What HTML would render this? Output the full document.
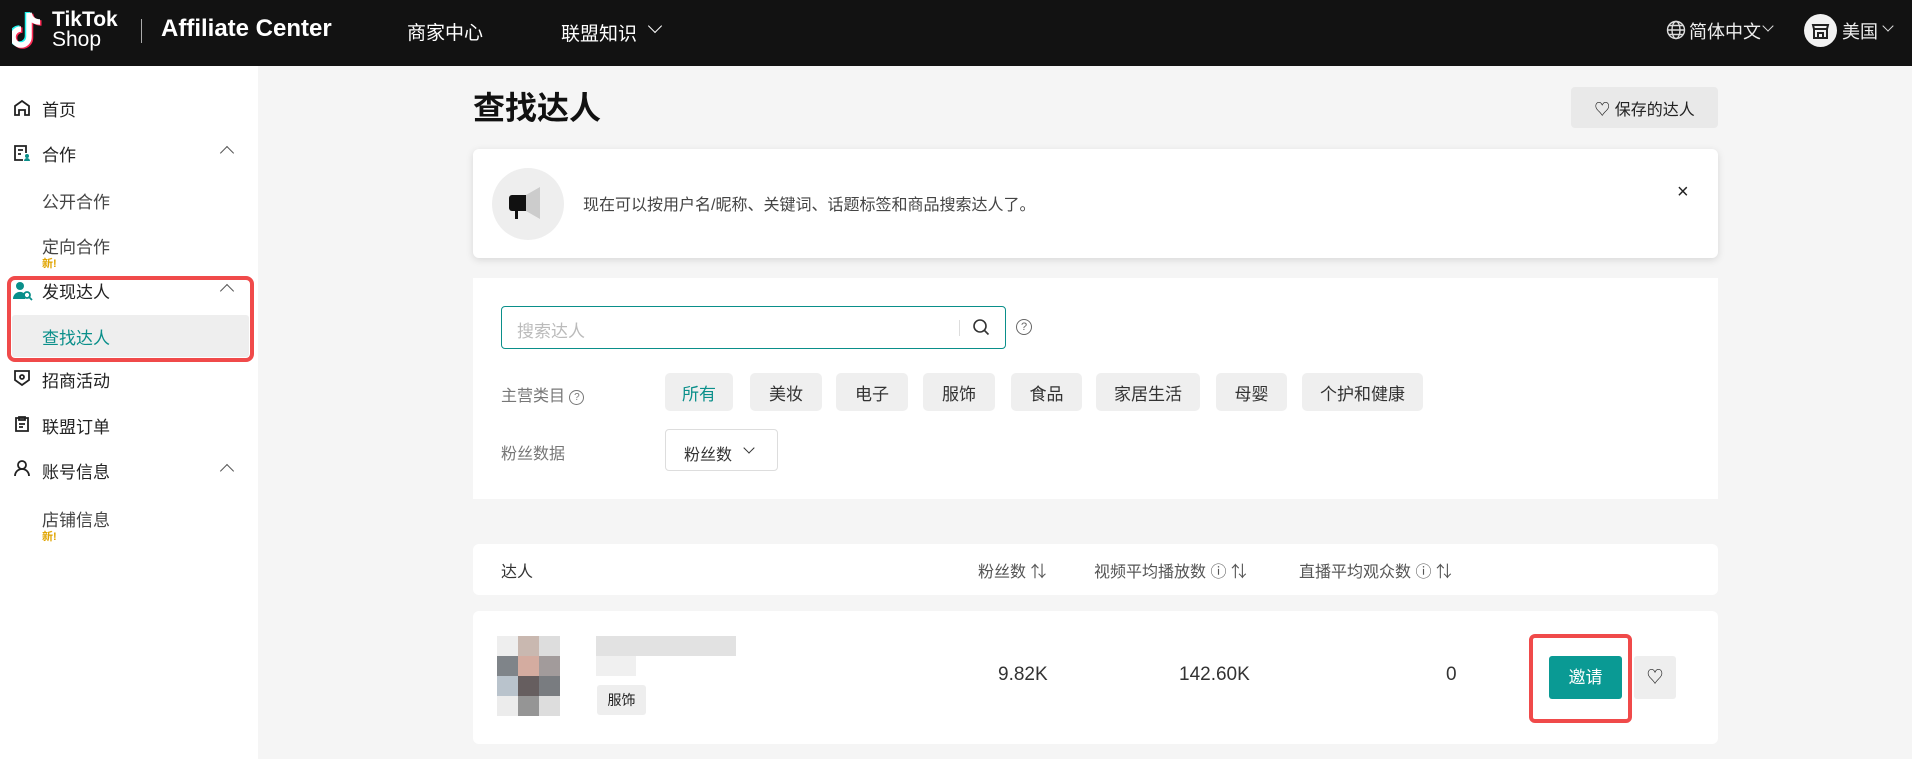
<!DOCTYPE html>
<html><head><meta charset="utf-8"><style>
*{box-sizing:border-box;margin:0;padding:0}
body{width:1912px;height:759px;overflow:hidden;background:#f5f5f5;font-family:"Liberation Sans","Noto Sans CJK SC",sans-serif;color:#222;position:relative}
.a{position:absolute}
.hdr{left:0;top:0;width:1912px;height:66px;background:#121212;color:#fff}
.side{left:0;top:66px;width:258px;height:693px;background:#fff}
.si{position:absolute;left:42px;font-size:17px;color:#222}
.sub{position:absolute;left:42px;font-size:17px;color:#444}
.new{position:absolute;left:42px;font-size:11px;color:#e0a400;font-weight:bold}
.ic{position:absolute;left:13px}
.chev{position:absolute;left:222px;width:10px;height:10px;border-left:1.6px solid #555;border-top:1.6px solid #555;transform:rotate(45deg)}
.card{background:#fff;border-radius:6px}
.chip{position:absolute;top:373px;height:38px;background:#efefef;border-radius:5px;font-size:17px;color:#333;display:flex;align-items:center;justify-content:center}
.th{position:absolute;top:558px;font-size:16px;color:#555}
.v{position:absolute;top:664px;font-size:19px;color:#333}
</style></head><body>
<div class="a hdr">
 <svg class="a" style="left:12px;top:9px" width="32" height="42" viewBox="0 0 32 42"><g fill="none" stroke-width="5.5"><path d="M17 4v24a8 8 0 1 1-8-8" stroke="#25f4ee" transform="translate(-1.5,-1)"/><path d="M17 4v24a8 8 0 1 1-8-8M17 4c1 6 5 9 11 9" stroke="#fe2c55" transform="translate(1.5,1)"/><path d="M17 4v24a8 8 0 1 1-8-8M17 4c1 6 5 9 11 9" stroke="#fff"/></g></svg>
 <div class="a" style="left:52px;top:9px;font-weight:bold;font-size:21px;line-height:21px">TikTok</div>
 <div class="a" style="left:52px;top:29px;font-size:21px;line-height:22px">Shop</div>
 <div class="a" style="left:141px;top:19px;width:1px;height:24px;background:#aaa"></div>
 <div class="a" style="left:161px;top:15px;font-size:24px;font-weight:bold">Affiliate Center</div>
 <div class="a" style="left:407px;top:18px;font-size:19px">商家中心</div>
 <div class="a" style="left:561px;top:19px;font-size:19px">联盟知识</div>
 <div class="a" style="left:650px;top:21px;width:10px;height:10px;border-right:1.8px solid #fff;border-bottom:1.8px solid #fff;transform:rotate(45deg)"></div>
 <svg class="a" style="left:1666px;top:20px" width="20" height="20" viewBox="0 0 20 20" fill="none" stroke="#ddd" stroke-width="1.4"><circle cx="10" cy="10" r="8.5"/><ellipse cx="10" cy="10" rx="4" ry="8.5"/><path d="M1.5 10h17M3 5.5h14M3 14.5h14"/></svg>
 <div class="a" style="left:1689px;top:18px;font-size:18px;color:#eee">简体中文</div>
 <div class="a" style="left:1764px;top:22px;width:8px;height:8px;border-right:1.4px solid #ddd;border-bottom:1.4px solid #ddd;transform:rotate(45deg)"></div>
 <div class="a" style="left:1804px;top:14px;width:33px;height:33px;border-radius:50%;background:#f2f2f2"></div>
 <svg class="a" style="left:1811px;top:21px" width="19" height="19" viewBox="0 0 19 19" fill="none" stroke="#222" stroke-width="2"><path d="M2 4h15l-1 4H3zM3 8v9h13V8M7 17v-5h5v5"/></svg>
 <div class="a" style="left:1842px;top:18px;font-size:18px;color:#eee">美国</div>
 <div class="a" style="left:1884px;top:22px;width:8px;height:8px;border-right:1.4px solid #ddd;border-bottom:1.4px solid #ddd;transform:rotate(45deg)"></div>
</div>
<div class="a side">
 <svg class="ic" style="top:33px" width="18" height="18" viewBox="0 0 18 18" fill="none" stroke="#222" stroke-width="1.8"><path d="M2 16V7l7-5 7 5v9h-4v-5H6v5z"/></svg>
 <div class="si" style="top:30px">首页</div>
 <svg class="ic" style="top:78px" width="18" height="18" viewBox="0 0 18 18" fill="none" stroke="#222" stroke-width="1.8"><path d="M10 16H2V2h11v7M5 6h5M5 10h3"/><circle cx="14" cy="12" r="2" fill="#0a8f8a" stroke="none"/><path d="M11 17a3 3 0 0 1 6 0" fill="#0a8f8a" stroke="none"/></svg>
 <div class="si" style="top:75px">合作</div>
 <div class="chev" style="top:82px"></div>
 <div class="sub" style="top:122px">公开合作</div>
 <div class="sub" style="top:167px">定向合作</div>
 <div class="new" style="top:189px">新!</div>
 <div class="a" style="left:7px;top:210px;width:247px;height:86px;border:4px solid #f04a4a;border-radius:8px"></div>
 <svg class="ic" style="top:215px" width="20" height="20" viewBox="0 0 20 20"><circle cx="7" cy="5" r="4" fill="#0a8f8a"/><path d="M0 18a7 7 0 0 1 12-5v5z" fill="#0a8f8a"/><circle cx="14" cy="14" r="3" fill="none" stroke="#0a8f8a" stroke-width="1.8"/><path d="M16 16l3 3" stroke="#0a8f8a" stroke-width="1.8"/></svg>
 <div class="si" style="top:212px">发现达人</div>
 <div class="chev" style="top:220px"></div>
 <div class="a" style="left:12px;top:249px;width:237px;height:42px;background:#eeeeee;border-radius:3px"></div>
 <div class="sub" style="top:258px;color:#0a8f8a">查找达人</div>
 <svg class="ic" style="top:303px" width="18" height="18" viewBox="0 0 18 18" fill="none" stroke="#222" stroke-width="1.8"><path d="M2 2h14v9l-7 5-7-5z"/><circle cx="9" cy="8" r="2"/></svg>
 <div class="si" style="top:301px">招商活动</div>
 <svg class="ic" style="top:349px" width="18" height="18" viewBox="0 0 18 18" fill="none" stroke="#222" stroke-width="1.8"><path d="M3 3h12v13H3zM6 2h6v3H6zM6 9h6M6 12h4"/></svg>
 <div class="si" style="top:347px">联盟订单</div>
 <svg class="ic" style="top:393px" width="18" height="18" viewBox="0 0 18 18" fill="none" stroke="#222" stroke-width="1.8"><circle cx="9" cy="6" r="4"/><path d="M2 17a7 7 0 0 1 14 0"/></svg>
 <div class="si" style="top:392px">账号信息</div>
 <div class="chev" style="top:400px"></div>
 <div class="sub" style="top:440px">店铺信息</div>
 <div class="new" style="top:462px">新!</div>
</div>

<div class="a" style="left:473px;top:83px;font-size:32px;font-weight:bold;color:#111">查找达人</div>
<div class="a" style="left:1571px;top:87px;width:147px;height:41px;background:#e9e9e9;border-radius:4px;font-size:16px;color:#222;display:flex;align-items:center;justify-content:center">♡&nbsp;保存的达人</div>

<div class="a card" style="left:473px;top:149px;width:1245px;height:109px;box-shadow:0 2px 8px rgba(0,0,0,.12)">
 <div class="a" style="left:19px;top:19px;width:72px;height:72px;border-radius:50%;background:#eee"></div>
 <svg class="a" style="left:34px;top:36px" width="40" height="40" viewBox="0 0 40 40"><path d="M19 10l14-8v32l-14-8z" fill="#ccc"/><path d="M5 10h14v16H5a3 3 0 0 1-3-3v-10a3 3 0 0 1 3-3z" fill="#111"/><rect x="8" y="26" width="3" height="8" fill="#111"/></svg>
 <div class="a" style="left:110px;top:42px;font-size:16px;color:#444">现在可以按用户名/昵称、关键词、话题标签和商品搜索达人了。</div>
 <div class="a" style="left:1204px;top:32px;font-size:20px;color:#222">×</div>
</div>

<div class="a card" style="left:473px;top:278px;width:1245px;height:221px;border-radius:0"></div>
<div class="a" style="left:501px;top:306px;width:505px;height:43px;border:1.5px solid #0a8f8a;border-radius:4px;background:#fff">
 <div class="a" style="left:15px;top:10px;font-size:17px;color:#bbb">搜索达人</div>
 <div class="a" style="left:457px;top:13px;width:1px;height:16px;background:#ddd"></div>
 <svg class="a" style="left:470px;top:11px" width="18" height="18" viewBox="0 0 18 18" fill="none" stroke="#333" stroke-width="1.6"><circle cx="8" cy="8" r="6"/><path d="M12.5 12.5l4 4"/></svg>
</div>
<div class="a" style="left:1016px;top:319px;width:16px;height:16px;border:1.3px solid #666;border-radius:50%;font-size:11px;text-align:center;line-height:14px;color:#666">?</div>
<div class="a" style="left:501px;top:382px;font-size:16px;color:#777">主营类目 <span style="display:inline-block;width:15px;height:15px;border:1.2px solid #777;border-radius:50%;font-size:10px;text-align:center;line-height:13px;vertical-align:1px">?</span></div>
<div class="chip" style="left:665px;width:68px;color:#0a8f8a">所有</div>
<div class="chip" style="left:750px;width:72px">美妆</div>
<div class="chip" style="left:836px;width:72px">电子</div>
<div class="chip" style="left:923px;width:72px">服饰</div>
<div class="chip" style="left:1011px;width:71px">食品</div>
<div class="chip" style="left:1096px;width:104px">家居生活</div>
<div class="chip" style="left:1216px;width:71px">母婴</div>
<div class="chip" style="left:1302px;width:121px">个护和健康</div>
<div class="a" style="left:501px;top:440px;font-size:16px;color:#777">粉丝数据</div>
<div class="a" style="left:665px;top:429px;width:113px;height:42px;border:1px solid #ddd;border-radius:4px;background:#fff;font-size:16px;color:#333;padding:11px 0 0 18px">粉丝数</div>
<div class="a" style="left:745px;top:444px;width:8px;height:8px;border-right:1.5px solid #333;border-bottom:1.5px solid #333;transform:rotate(45deg)"></div>

<div class="a card" style="left:473px;top:544px;width:1245px;height:51px"></div>
<div class="th" style="left:501px;color:#333">达人</div>
<div class="th" style="left:978px">粉丝数 ⇅</div>
<div class="th" style="left:1094px">视频平均播放数 ⓘ ⇅</div>
<div class="th" style="left:1299px">直播平均观众数 ⓘ ⇅</div>

<div class="a card" style="left:473px;top:611px;width:1245px;height:133px"></div>
<div class="a" style="left:497px;top:636px;display:grid;grid-template-columns:repeat(3,21px);grid-template-rows:repeat(4,20px)">
 <div style="background:#eee"></div><div style="background:#c9b8b0"></div><div style="background:#ddd"></div>
 <div style="background:#7f8489"></div><div style="background:#d4aca0"></div><div style="background:#a29b9b"></div>
 <div style="background:#b9c3cc"></div><div style="background:#665e5f"></div><div style="background:#797c80"></div>
 <div style="background:#ececec"></div><div style="background:#959595"></div><div style="background:#ddd"></div>
</div>
<div class="a" style="left:596px;top:636px;width:140px;height:20px;background:#e2e2e2"></div>
<div class="a" style="left:596px;top:656px;width:40px;height:20px;background:#f0f0f0"></div>
<div class="a" style="left:597px;top:685px;width:49px;height:30px;background:#eee;border-radius:3px;font-size:14px;text-align:center;line-height:30px;color:#222">服饰</div>
<div class="v" style="left:998px">9.82K</div>
<div class="v" style="left:1179px">142.60K</div>
<div class="v" style="left:1446px">0</div>
<div class="a" style="left:1529px;top:634px;width:103px;height:89px;border:4px solid #f04a4a;border-radius:6px"></div>
<div class="a" style="left:1549px;top:656px;width:73px;height:43px;background:#0a9a94;border-radius:3px;color:#fff;font-size:17px;text-align:center;line-height:43px">邀请</div>
<div class="a" style="left:1634px;top:656px;width:42px;height:43px;background:#eee;border-radius:3px;font-size:17px;text-align:center;line-height:43px">♡</div>
</body></html>
